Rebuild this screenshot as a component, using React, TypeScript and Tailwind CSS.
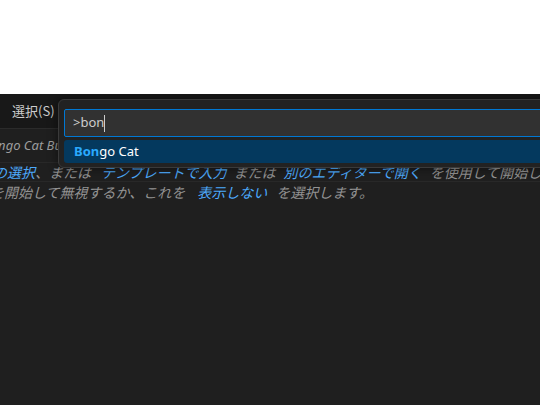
import React from 'react';

const uiFont = { fontFamily: '"Segoe UI", "Noto Sans", "Noto Sans CJK JP", sans-serif' };
const jpFont = { fontFamily: '"Noto Sans CJK JP", "Noto Sans", sans-serif' };

const Link: React.FC<{ children: React.ReactNode }> = ({ children }) => (
  <span className="text-[#4daafc]">{children}</span>
);

const Gap: React.FC<{ w: string }> = ({ w }) => <span className={`inline-block ${w}`} />;

const App: React.FC = () => {
  return (
    <div className="w-[540px] h-[405px] bg-white overflow-hidden">
      <div className="h-[94px] bg-white" />

      <div className="relative h-[311px] bg-[#1f1f1f] overflow-hidden">
        {/* Title bar */}
        <div className="h-[35px] bg-[#181818] border-b border-[#2b2b2b] flex items-center pl-[12px]">
          <span className="text-[13px] text-[#cccccc]" style={jpFont}>選択(S)</span>
        </div>

        {/* Tab / breadcrumb strip */}
        <div className="h-[33px] flex items-center">
          <span className="-ml-[17px] italic text-[13px] text-[#9d9d9d] whitespace-nowrap" style={uiFont}>
            Bongo Cat Buddy
          </span>
        </div>

        {/* Editor hint */}
        <div className="text-[14px] italic text-[#929292] whitespace-nowrap" style={jpFont}>
          <div className="h-[20px] leading-[18px] border-y border-[#282828] -ml-[35px]">
            言語<Link>の選択</Link>、または<Gap w="w-[10px]" />
            <Link>テンプレートで入力</Link><Gap w="w-[7px]" />または<Gap w="w-[8px]" />
            <Link>別のエディターで開く</Link><Gap w="w-[8px]" />を使用して開始します。
          </div>
          <div className="h-[20px] leading-[20px] -ml-[38px]">
            入力を開始して無視するか、これを<Gap w="w-[12px]" />
            <Link>表示しない</Link><Gap w="w-[9px]" />を選択します。
          </div>
        </div>

        {/* Quick pick */}
        <div className="absolute left-[58px] top-[5px] w-[520px] bg-[#222222] border border-[#3a3a3a] rounded-[6px] shadow-[0_0_8px_2px_rgba(0,0,0,0.36)] px-[5px] pt-[9px] pb-[4px]">
          <div className="h-[28px] bg-[#313131] border border-[#0078d4] rounded-[2px] flex items-center pl-[8px]">
            <span className="text-[13px] text-[#cccccc]" style={uiFont}>&gt;bon</span>
            <span className="w-px h-[17px] bg-[#cccccc]" />
          </div>
          <div className="mt-[3px] h-[23px] bg-[#04395e] rounded-[3px] flex items-center pl-[10px]">
            <span className="text-[13px] text-white" style={uiFont}>
              <span className="font-bold text-[#2aaaff]">Bon</span>go Cat
            </span>
          </div>
        </div>
      </div>
    </div>
  );
};

export default App;
